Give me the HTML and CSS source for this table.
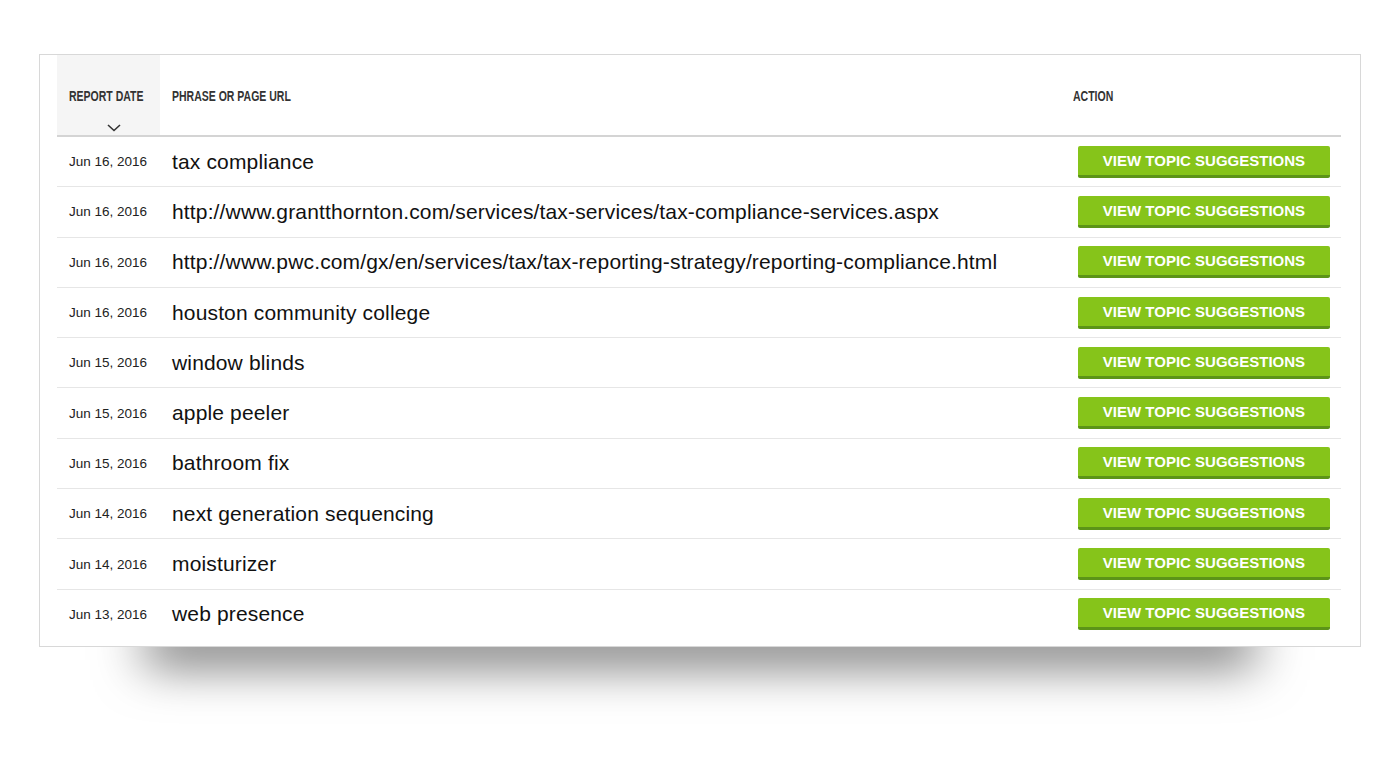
FILE: index.html
```html
<!doctype html>
<html>
<head>
    <meta charset="UTF-8">
    <title>Topic Reports</title>
    <link rel="stylesheet" href="styles.css">
</head>
<body>
    <div class="page">
        <div class="card">
            <table class="reports">
                <colgroup>
                    <col class="col-date">
                    <col class="col-phrase">
                    <col class="col-action">
                </colgroup>
                <thead>
                    <tr>
                        <th class="sorted">
                            <span class="label">Report Date</span>
                            <svg class="chevron" width="14" height="8" viewBox="0 0 14 8"><path d="M1 1l6 5.5L13 1" fill="none" stroke="#333" stroke-width="1.6"/></svg>
                        </th>
                        <th><span class="label">Phrase or Page URL</span></th>
                        <th class="action-head"><span class="label">Action</span></th>
                    </tr>
                </thead>
                <tbody>
                    <tr><td class="date">Jun 16, 2016</td><td class="phrase">tax compliance</td><td class="action"><button>View Topic Suggestions</button></td></tr>
                    <tr><td class="date">Jun 16, 2016</td><td class="phrase">http://www.grantthornton.com/services/tax-services/tax-compliance-services.aspx</td><td class="action"><button>View Topic Suggestions</button></td></tr>
                    <tr><td class="date">Jun 16, 2016</td><td class="phrase">http://www.pwc.com/gx/en/services/tax/tax-reporting-strategy/reporting-compliance.html</td><td class="action"><button>View Topic Suggestions</button></td></tr>
                    <tr><td class="date">Jun 16, 2016</td><td class="phrase">houston community college</td><td class="action"><button>View Topic Suggestions</button></td></tr>
                    <tr><td class="date">Jun 15, 2016</td><td class="phrase">window blinds</td><td class="action"><button>View Topic Suggestions</button></td></tr>
                    <tr><td class="date">Jun 15, 2016</td><td class="phrase">apple peeler</td><td class="action"><button>View Topic Suggestions</button></td></tr>
                    <tr><td class="date">Jun 15, 2016</td><td class="phrase">bathroom fix</td><td class="action"><button>View Topic Suggestions</button></td></tr>
                    <tr><td class="date">Jun 14, 2016</td><td class="phrase">next generation sequencing</td><td class="action"><button>View Topic Suggestions</button></td></tr>
                    <tr><td class="date">Jun 14, 2016</td><td class="phrase">moisturizer</td><td class="action"><button>View Topic Suggestions</button></td></tr>
                    <tr><td class="date">Jun 13, 2016</td><td class="phrase">web presence</td><td class="action"><button>View Topic Suggestions</button></td></tr>
                </tbody>
            </table>
        </div>
    </div>
</body>
</html>
```
FILE: styles.css
```css
body {
    margin: 0;
    background-color: white;
    font-family: "Liberation Sans", Arial, sans-serif;
    color: #111;
}

.page {
    position: relative;
    z-index: 0;
    height: 760px;
    padding-top: 54px;
    box-sizing: border-box;
    background-color: white;
}

.card {
    position: relative;
    margin-left: 39px;
    width: 1284px;
    padding: 0 19px 7px 17px;
    background-color: white;
    border: 1px solid #d8d8d8;
}

/* soft shadow under the middle of the card */
.card::after {
    content: "";
    position: absolute;
    left: 105px;
    right: 105px;
    bottom: 10px;
    height: 40px;
    z-index: -1;
    box-shadow: 0 28px 50px rgba(0, 0, 0, .6);
}

.reports {
    width: 100%;
    table-layout: fixed;
    border-collapse: collapse;
}

.col-date {
    width: 103px;
}

.col-action {
    width: 268px;
}

th {
    height: 80px;
    padding: 0 12px;
    text-align: left;
    font-size: 14px;
    font-weight: bold;
    text-transform: uppercase;
    white-space: nowrap;
    color: #333;
    border-bottom: 2px solid #d4d4d4;
    vertical-align: middle;
}

th .label {
    display: inline-block;
    margin-top: 2px;
    transform: scaleX(.75);
    transform-origin: left center;
}

th.sorted {
    position: relative;
    background-color: #f5f5f5;
}

th.action-head {
    padding-left: 0;
}

.chevron {
    position: absolute;
    left: 50px;
    bottom: 3px;
}

td {
    height: 49.3px;
    padding: 0 12px;
    border-bottom: 1px solid #e6e6e6;
}

tbody tr:last-child td {
    border-bottom: 0;
}

.date {
    font-size: 13.5px;
    color: #222;
    white-space: nowrap;
}

.phrase {
    font-size: 21px;
    letter-spacing: .15px;
    color: #111;
    white-space: nowrap;
}

.action {
    padding: 0 11px 0 5px;
}

button {
    display: block;
    width: 252px;
    height: 32px;
    padding: 0;
    border: 0;
    border-bottom: 3px solid #5c9418;
    border-radius: 2px;
    background-color: #86c41a;
    color: white;
    font-family: "Liberation Sans", Arial, sans-serif;
    font-size: 15px;
    font-weight: bold;
    text-transform: uppercase;
    cursor: pointer;
}
```
